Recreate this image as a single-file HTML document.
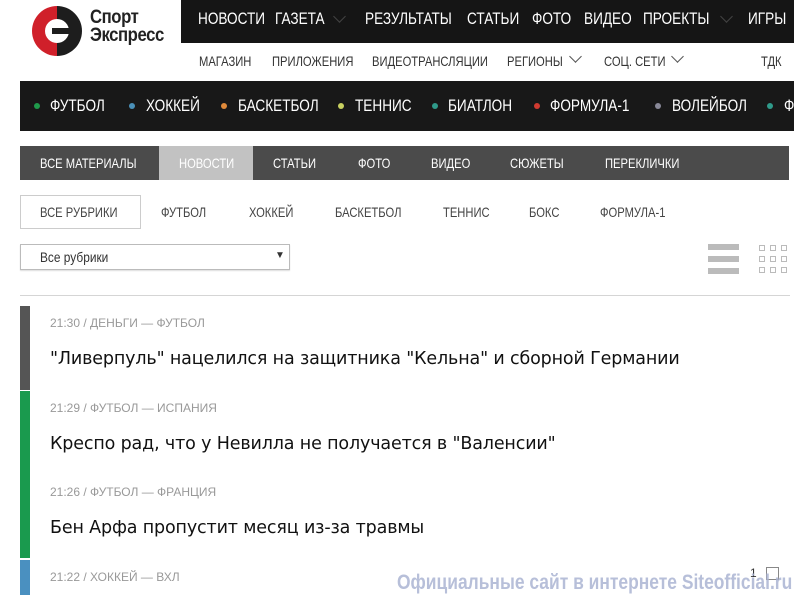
<!DOCTYPE html>
<html><head><meta charset="utf-8"><style>
*{margin:0;padding:0;box-sizing:border-box}
body{width:794px;height:595px;overflow:hidden;background:#fff;position:relative;font-family:"Liberation Sans",sans-serif;}
.a{position:absolute;white-space:nowrap}
.top span,.sub span,.sport span,.tabs span,.rub span{transform:scaleX(.8);transform-origin:0 0;white-space:nowrap}
.top{left:181px;top:0;width:613px;height:43px;background:#151515;overflow:hidden}
.top span{position:absolute;top:9px;color:#fff;font-size:17px}
.sub span{position:absolute;top:53px;color:#333;font-size:14px}
.sport{left:20px;top:81px;width:774px;height:50px;background:#181818;overflow:hidden}
.sport span{position:absolute;top:15px;color:#fff;font-size:17px}
.dot{position:absolute;top:22px;width:6px;height:6px;border-radius:3px}
.tabs{left:20px;top:146px;width:769px;height:34px;background:#4b4b4b}
.tabs span{position:absolute;top:9px;color:#fff;font-size:14px}
.rub span{position:absolute;top:204px;color:#444;font-size:14px}
.meta{position:absolute;left:50px;color:#999;font-size:12px;white-space:nowrap}
.tt{position:absolute;left:50px;color:#111;font-size:17.5px;font-family:"DejaVu Sans",sans-serif;white-space:nowrap;letter-spacing:-0.15px}
.chev{position:absolute;width:9px;height:9px;border-right:1.5px solid #555;border-bottom:1.5px solid #555;transform:rotate(45deg)}
</style></head><body>
<svg class="a" style="left:30px;top:4px" width="56" height="56" viewBox="0 0 56 56">
<path d="M27 2 A25 25 0 0 0 27 52 Z" fill="#d0202a"/>
<path d="M27 2 A25 25 0 0 1 27 52 Z" fill="#1d1d1d"/>
<circle cx="27" cy="27" r="12" fill="#fff"/>
<rect x="22" y="24" width="18" height="6" fill="#1d1d1d"/>
</svg>
<div class="a" style="left:90px;top:9px;font-weight:bold;font-size:19px;line-height:18px;color:#222;letter-spacing:-0.5px;transform:scaleX(.88);transform-origin:0 0">Спорт<br>Экспресс</div>
<div class="a top">
<span style="left:17px">НОВОСТИ</span><span style="left:94px">ГАЗЕТА</span>
<i class="chev" style="left:154px;top:12px;border-color:#444"></i>
<span style="left:184px">РЕЗУЛЬТАТЫ</span><span style="left:286px">СТАТЬИ</span><span style="left:351px">ФОТО</span><span style="left:403px">ВИДЕО</span><span style="left:462px">ПРОЕКТЫ</span>
<i class="chev" style="left:541px;top:12px;border-color:#444"></i>
<span style="left:567px">ИГРЫ</span></div>
<div class="sub">
<span style="left:199px">МАГАЗИН</span><span style="left:272px">ПРИЛОЖЕНИЯ</span><span style="left:372px">ВИДЕОТРАНСЛЯЦИИ</span><span style="left:507px">РЕГИОНЫ</span><span style="left:604px">СОЦ. СЕТИ</span><span style="left:761px">ТДК</span></div>
<i class="chev" style="left:571px;top:52px"></i>
<i class="chev" style="left:673px;top:52px"></i>
<div class="a sport">
<i class="dot" style="left:14px;background:#1f9a4b"></i><span style="left:30px">ФУТБОЛ</span>
<i class="dot" style="left:109px;background:#4a90b8"></i><span style="left:126px">ХОККЕЙ</span>
<i class="dot" style="left:201px;background:#e08a3a"></i><span style="left:218px">БАСКЕТБОЛ</span>
<i class="dot" style="left:318px;background:#c8d060"></i><span style="left:335px">ТЕННИС</span>
<i class="dot" style="left:412px;background:#2f9a8a"></i><span style="left:428px">БИАТЛОН</span>
<i class="dot" style="left:514px;background:#d03a30"></i><span style="left:530px">ФОРМУЛА-1</span>
<i class="dot" style="left:635px;background:#888898"></i><span style="left:652px">ВОЛЕЙБОЛ</span>
<i class="dot" style="left:747px;background:#2f9a8a"></i><span style="left:764px">ФУТ</span></div>
<div class="a tabs">
<div class="a" style="left:139px;top:0;width:94px;height:34px;background:#c2c2c2"></div>
<span style="left:20px">ВСЕ МАТЕРИАЛЫ</span><span style="left:159px">НОВОСТИ</span><span style="left:253px">СТАТЬИ</span><span style="left:338px">ФОТО</span><span style="left:411px">ВИДЕО</span><span style="left:490px">СЮЖЕТЫ</span><span style="left:585px">ПЕРЕКЛИЧКИ</span></div>
<div class="a" style="left:20px;top:195px;width:121px;height:34px;border:1px solid #ccc"></div>
<div class="rub"><span style="left:40px">ВСЕ РУБРИКИ</span><span style="left:161px">ФУТБОЛ</span><span style="left:249px">ХОККЕЙ</span><span style="left:335px">БАСКЕТБОЛ</span><span style="left:443px">ТЕННИС</span><span style="left:529px">БОКС</span><span style="left:600px">ФОРМУЛА-1</span></div>
<div class="a" style="left:20px;top:244px;width:270px;height:26px;border:1px solid #bbb;box-shadow:0 1px 1px #ddd"></div>
<div class="a" style="left:40px;top:249px;color:#333;font-size:14px;transform:scaleX(.85);transform-origin:0 0">Все рубрики</div>
<div class="a" style="left:275px;top:250px;font-size:10px;color:#333">▼</div>
<div class="a" style="left:708px;top:244px;width:31px;height:6px;background:#bbb"></div>
<div class="a" style="left:708px;top:256px;width:31px;height:6px;background:#bbb"></div>
<div class="a" style="left:708px;top:268px;width:31px;height:6px;background:#bbb"></div>
<svg class="a" style="left:758px;top:244px" width="32" height="32"><g fill="none" stroke="#bbb" stroke-width="1">
<rect x="1.5" y="1.5" width="5" height="5"/><rect x="12.5" y="1.5" width="5" height="5"/><rect x="23.5" y="1.5" width="5" height="5"/>
<rect x="1.5" y="12.5" width="5" height="5"/><rect x="12.5" y="12.5" width="5" height="5"/><rect x="23.5" y="12.5" width="5" height="5"/>
<rect x="1.5" y="23.5" width="5" height="5"/><rect x="12.5" y="23.5" width="5" height="5"/><rect x="23.5" y="23.5" width="5" height="5"/></g></svg>
<div class="a" style="left:20px;top:295px;width:770px;height:1px;background:#d5d5d5"></div>
<div class="a" style="left:20px;top:306px;width:10px;height:84px;background:#555"></div>
<div class="a" style="left:20px;top:391px;width:10px;height:167px;background:#1a9a4e"></div>
<div class="a" style="left:20px;top:560px;width:10px;height:35px;background:#4a90c0"></div>
<div class="meta" style="top:316px">21:30 / ДЕНЬГИ — ФУТБОЛ</div>
<div class="tt" style="top:349px">"Ливерпуль" нацелился на защитника "Кельна" и сборной Германии</div>
<div class="meta" style="top:401px">21:29 / ФУТБОЛ — ИСПАНИЯ</div>
<div class="tt" style="top:434px">Креспо рад, что у Невилла не получается в "Валенсии"</div>
<div class="meta" style="top:485px">21:26 / ФУТБОЛ — ФРАНЦИЯ</div>
<div class="tt" style="top:518px">Бен Арфа пропустит месяц из-за травмы</div>
<div class="meta" style="top:570px">21:22 / ХОККЕЙ — ВХЛ</div>
<div class="a" style="left:750px;top:566px;font-size:12px;color:#333">1</div>
<div class="a" style="left:766px;top:567px;width:13px;height:13px;border:1px solid #888"></div>
<div class="a" style="left:397px;top:571px;font-size:21px;font-weight:bold;color:rgba(170,180,210,0.85);transform:scaleX(.83);transform-origin:0 0">Официальные сайт в интернете Siteofficial.ru</div>
</body></html>
